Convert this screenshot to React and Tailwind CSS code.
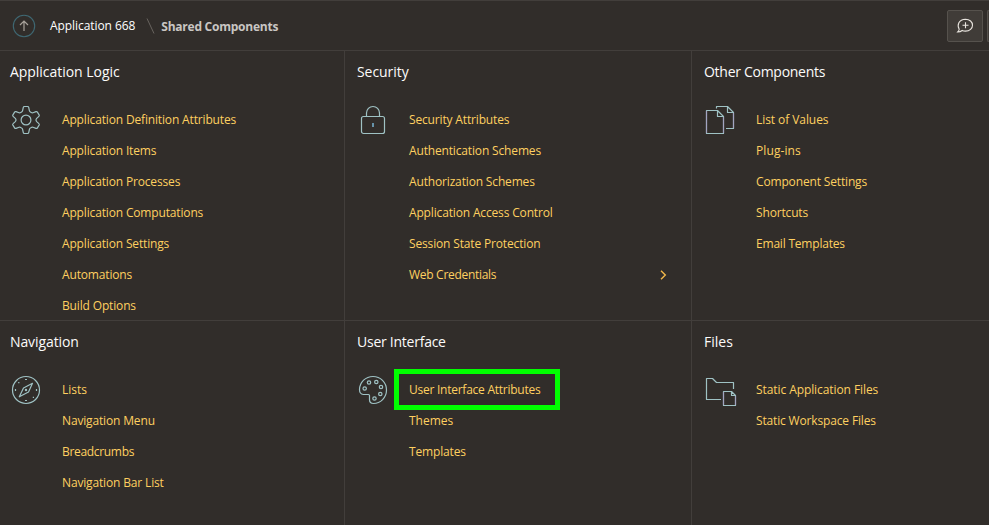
const iconProps = {
  width: 32,
  height: 32,
  viewBox: '0 0 32 32',
  fill: 'none',
  stroke: '#9fc2c4',
  strokeWidth: 1.2,
  strokeLinejoin: 'round',
};

const GearIcon = () => (
  <svg {...iconProps}>
    <path d="M13.3 3.400q.2-.9 1.100-.9h3.200q.9 0 1.100.9l.7 3.300q.2.900 1 1.300l.9.500q.8.500 1.700.2l3-1.100q.9-.3 1.400.5l1.700 2.800q.5.900-.2 1.500l-2.200 2q-.7.700-.7 1.600t.7 1.600l2.200 2q.7.600.2 1.500l-1.700 2.800q-.5.800-1.400.5l-3-1.100q-.9-.3-1.700.2l-.9.500q-.8.400-1 1.300l-.7 3.300q-.2.900-1.100.9h-3.200q-.9 0-1.100-.9l-.7-3.300q-.2-.9-1-1.300l-.9-.5q-.8-.5-1.700-.2l-3 1.100q-.9.300-1.400-.5l-1.700-2.800q-.5-.9.200-1.500l2.200-2q.7-.7.700-1.600t-.7-1.600l-2.200-2q-.7-.6-.2-1.500l1.700-2.800q.5-.8 1.400-.5l3 1.100q.9.300 1.700-.2l.9-.5q.8-.4 1-1.300z" />
    <circle cx="16" cy="16" r="4.900" />
  </svg>
);

const LockIcon = () => (
  <svg {...iconProps}>
    <rect x="4.500" y="12.500" width="23" height="17" rx="2" />
    <path d="M9.500 12.500V9a6.500 6.500 0 0 1 13 0v3.500" />
    <path d="M16 19v4" stroke="#6d9fb8" strokeWidth="1.800" />
  </svg>
);

const CopyIcon = () => (
  <svg {...iconProps}>
    <path d="M2.500 6.500h11l6 6v17h-17zM13.500 6.500v6h6" />
    <path d="M12.500 4.500v-2h11l6 6v16H22M23.500 2.500v6h6" />
    <path d="M2.500 7v22M19.500 13v16M29.500 9v15" stroke="#a58fc0" strokeOpacity=".6" />
  </svg>
);

const CompassIcon = () => (
  <svg {...iconProps}>
    <circle cx="16" cy="16" r="13.500" />
    <path d="M22.500 9.300l-4 8.700-9.200 4.800 4.200-8.800z" />
    <circle cx="16" cy="16" r=".6" />
    <path d="M15 5.500h2M15 26.500h2M5.500 15v2M26.500 15v2M8.200 8.700h1.200M22.800 23.300h1.200" />
  </svg>
);

const PaletteIcon = () => (
  <svg {...iconProps}>
    <path d="M12.500 25.800v-4.300q0-1-1-1H6.200C3.800 20.500 2.500 18 2.500 15.500 2.800 8 8.600 2.500 16 2.500S29.500 8.500 29.500 16 23.500 29.500 16.500 29.500c-2.600 0-4-1.600-4-3.700z" />
    <circle cx="12" cy="8.500" r="1.700" />
    <circle cx="19.300" cy="8" r="1.700" />
    <circle cx="24" cy="13" r="1.700" />
    <circle cx="7.700" cy="14.500" r="1.700" />
    <circle cx="23.300" cy="20" r="1.700" />
    <circle cx="17.500" cy="24.500" r="1.700" />
  </svg>
);

const FolderIcon = () => (
  <svg {...iconProps}>
    <path d="M17 25.500H2.500v-21h6l4 4h17V15" />
    <path d="M19.500 17.500h8l4 4v10h-12zM27.500 17.500v4h4" />
    <path d="M19.500 18v13M31.500 22v9" stroke="#a58fc0" strokeOpacity=".6" />
  </svg>
);

// Labels whose letter fit differs from the default link tracking.
const linkTracking = {
  'Web Credentials': 'tracking-[-0.29px]',
  'List of Values': 'tracking-[-0.07px]',
  'Plug-ins': 'tracking-[0.1px]',
  Breadcrumbs: 'tracking-[-0.32px]',
  'User Interface Attributes': 'tracking-[-0.25px]',
  Themes: 'tracking-normal',
  Lists: 'tracking-normal',
  'Email Templates': 'tracking-[-0.2px]',
  'Static Application Files': 'tracking-[-0.08px]',
};

const sections = [
  {
    title: 'Application Logic', Icon: GearIcon, titleTracking: 'tracking-[-0.04px]',
    links: ['Application Definition Attributes', 'Application Items', 'Application Processes', 'Application Computations', 'Application Settings', 'Automations', 'Build Options'],
  },
  {
    title: 'Security', Icon: LockIcon, titleTracking: 'tracking-[-0.06px]',
    links: ['Security Attributes', 'Authentication Schemes', 'Authorization Schemes', 'Application Access Control', 'Session State Protection', 'Web Credentials'],
    chevronOn: 'Web Credentials',
  },
  {
    title: 'Other Components', Icon: CopyIcon, titleTracking: 'tracking-[-0.28px]',
    links: ['List of Values', 'Plug-ins', 'Component Settings', 'Shortcuts', 'Email Templates'],
  },
  {
    title: 'Navigation', Icon: CompassIcon, titleTracking: 'tracking-[-0.1px]',
    links: ['Lists', 'Navigation Menu', 'Breadcrumbs', 'Navigation Bar List'],
  },
  {
    title: 'User Interface', Icon: PaletteIcon, titleTracking: 'tracking-[-0.25px]',
    links: ['User Interface Attributes', 'Themes', 'Templates'],
    highlighted: 'User Interface Attributes',
  },
  {
    title: 'Files', Icon: FolderIcon, titleTracking: 'tracking-normal',
    links: ['Static Application Files', 'Static Workspace Files'],
  },
];

function Section({ title, titleTracking, Icon, links, chevronOn, highlighted }) {
  return (
    <section className="border-r border-b border-[#423e3b] pl-[10px]">
      <h2 className={`mt-[11px] h-5 text-[14px] leading-5 text-[#fcfbfa] ${titleTracking}`}>{title}</h2>
      <div className="mt-[22px] flex">
        <div className="w-[52px] shrink-0 [&>svg]:overflow-visible">
          <Icon />
        </div>
        <ul className="grow">
          {links.map((link) => (
            <li key={link} className="relative flex h-[31px] items-center justify-between pr-[24px] text-[12px] text-[#ffd060]">
              <a className={linkTracking[link] || 'tracking-[-0.155px]'}>{link}</a>
              {link === chevronOn && (
                <svg width="7" height="10" viewBox="0 0 7 10" fill="none" stroke="#f2b84b" strokeWidth="1.400">
                  <path d="M1 .8L5.300 5 1 9.200" />
                </svg>
              )}
              {link === highlighted && (
                <span className="absolute -top-[5px] -left-[15px] h-[41px] w-[166px] border-5 border-[#00ff00]" />
              )}
            </li>
          ))}
        </ul>
      </div>
    </section>
  );
}

export default function App() {
  return (
    <div className="flex h-[525px] w-[989px] flex-col overflow-hidden bg-[#312d2a] font-['Open_Sans',sans-serif]">
      <header className="flex h-[51px] shrink-0 items-center border-y border-[#423e3b] pl-[12px]">
        <svg width="24" height="24" viewBox="0 0 24 24" fill="none">
          <circle cx="12" cy="12" r="10.700" stroke="#3f6873" strokeWidth="1.100" />
          <path d="M12 17V7.500M8 11l4-4 4 4" stroke="#a8a29b" strokeWidth="1.200" />
        </svg>
        <a className="ml-[14px] text-[12px] font-medium tracking-[-0.07px] text-white">Application 668</a>
        <svg className="ml-[11px]" width="9" height="16" viewBox="0 0 9 16" fill="none" stroke="#69645f">
          <path d="M1 .5l7 15" />
        </svg>
        <span className="mt-[2px] ml-[6px] text-[12px] font-bold tracking-[-0.24px] text-[#c9c6c3]">Shared Components</span>
        <div className="mr-[4px] ml-auto flex h-8 w-9 items-center justify-center rounded-[2px] border border-[#56524d] bg-[#403c38]">
          <svg width="18" height="16" viewBox="0 0 18 16" fill="none" stroke="#e9e5df" strokeWidth="1.100">
            <path d="M3.200 11.200C.9 7.300 2.500 1.500 9.500 1.300c4.200 0 7 2.600 7 5.900s-2.800 5.900-7 5.900c-1.300 0-2.400-.2-3.300-.6-1 .8-2.500 1.500-4.500 1.500.8-.8 1.400-1.700 1.500-2.800z" />
            <path d="M9.500 4.200v6M6.500 7.200h6" />
          </svg>
        </div>
        <div className="h-8 w-[2px] rounded-l-[2px] border-y border-l border-[#56524d] bg-[#403c38]" />
      </header>
      <main className="grid grow grid-cols-[345px_347px_297px] grid-rows-[270px_204px] [&>*:nth-child(3n)]:border-r-0 [&>*:nth-child(n+4)]:border-b-0 [&>*:not(:nth-child(3n+1))]:pl-[12px]">
        {sections.map((section) => (
          <Section key={section.title} {...section} />
        ))}
      </main>
    </div>
  );
}
